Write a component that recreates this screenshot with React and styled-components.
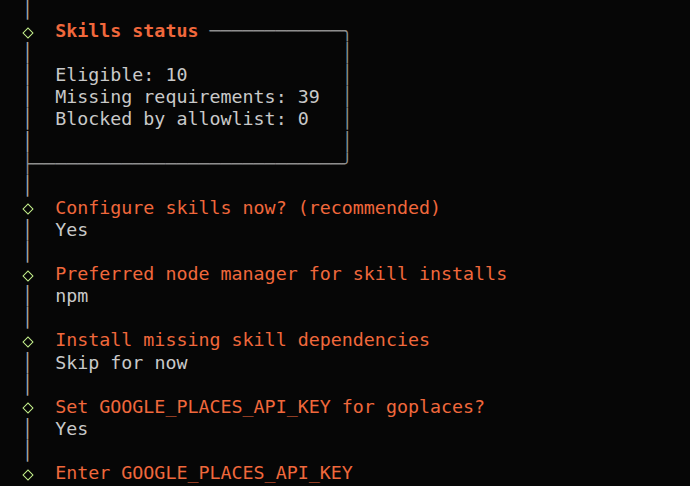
import React from "react";
import styled, { createGlobalStyle } from "styled-components";

const GlobalStyle = createGlobalStyle`
  html, body {
    margin: 0;
    padding: 0;
    background: #060606;
  }
  body {
    overflow: hidden;
  }
`;

const Terminal = styled.div`
  width: 690px;
  height: 486px;
  overflow: hidden;
  background: #060606;
  font-family: "DejaVu Sans Mono", "Liberation Mono", monospace;
  font-size: 18.32px;
  line-height: 22.1px;
  color: #c9c9c9;
`;

const Screen = styled.div`
  margin-top: -2px;
`;

const Line = styled.div`
  height: 22.1px;
  white-space: pre;
`;

const Rail = styled.span`
  color: #a9a9a9;
`;

const DiamondCell = styled.span`
  display: inline-flex;
  align-items: center;
  justify-content: center;
  vertical-align: top;
  width: 1ch;
  height: 22.1px;
  padding-top: 3px;
  box-sizing: border-box;

  &::before {
    content: "";
    width: 6px;
    height: 6px;
    border: 1.5px solid #c4ef8b;
    transform: rotate(45deg);
  }
`;

const Border = styled.span`
  color: #8e8e8e;
`;

const Prompt = styled.span`
  color: #f0683c;
  font-weight: ${(p) => (p.$bold ? 700 : 400)};
`;

const Answer = styled.span`
  color: #c9c9c9;
`;

const BOX_W = 28;

const pad = (s, n) => s + " ".repeat(Math.max(0, n - s.length));

const steps = [
  { q: "Configure skills now? (recommended)", a: "Yes" },
  { q: "Preferred node manager for skill installs", a: "npm" },
  { q: "Install missing skill dependencies", a: "Skip for now" },
  { q: "Set GOOGLE_PLACES_API_KEY for goplaces?", a: "Yes" },
];

const stats = ["Eligible: 10", "Missing requirements: 39", "Blocked by allowlist: 0"];

const Bar = () => (
  <Line>
    {"  "}
    <Rail>│</Rail>
  </Line>
);

const Ask = ({ children, bold, tail }) => (
  <Line>
    {"  "}
    <DiamondCell />
    {"  "}
    <Prompt $bold={bold}>{children}</Prompt>
    {tail}
  </Line>
);

const Reply = ({ children }) => (
  <Line>
    {"  "}
    <Rail>│</Rail>
    {"  "}
    <Answer>{children}</Answer>
  </Line>
);

const BoxRow = ({ text = "" }) => (
  <Line>
    {"  "}
    <Rail>│</Rail>
    <Answer>{pad(text ? "  " + text : "", BOX_W)}</Answer>
    <Border>│</Border>
  </Line>
);

const App = () => (
  <Terminal>
    <GlobalStyle />
    <Screen>
      <Bar />
      <Ask bold tail={<Border>{" " + "─".repeat(12) + "╮"}</Border>}>
        Skills status
      </Ask>
      <BoxRow />
      {stats.map((s) => (
        <BoxRow key={s} text={s} />
      ))}
      <BoxRow />
      <Line>
        {"  "}
        <Border>{"├" + "─".repeat(BOX_W) + "╯"}</Border>
      </Line>
      {steps.map((s) => (
        <React.Fragment key={s.q}>
          <Bar />
          <Ask>{s.q}</Ask>
          <Reply>{s.a}</Reply>
        </React.Fragment>
      ))}
      <Bar />
      <Ask>Enter GOOGLE_PLACES_API_KEY</Ask>
    </Screen>
  </Terminal>
);

export default App;
